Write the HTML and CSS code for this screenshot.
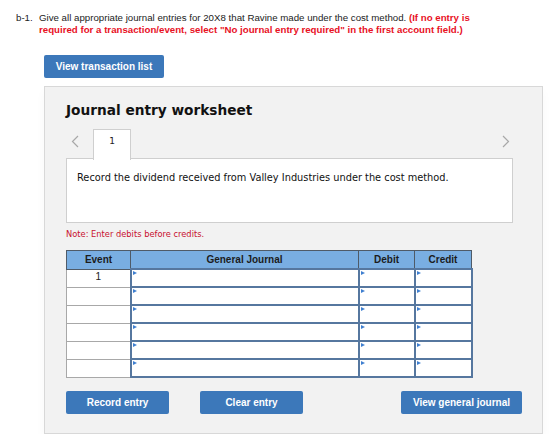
FILE: index.html
```html
<!DOCTYPE html>
<html lang="en">
<head>
    <meta charset="UTF-8">
    <title>Journal entry worksheet</title>
    <link rel="stylesheet" href="styles.css">
</head>
<body>

    <!-- question -->
    <div class="question">
        <span class="qnum">b-1.</span>
        <p class="qtext">Give all appropriate journal entries for 20X8 that Ravine made under the cost method. <strong class="warn">(If no entry is required for a transaction/event, select "No journal entry required" in the first account field.)</strong></p>
    </div>

    <button class="btn btn-list">View transaction list</button>

    <!-- worksheet -->
    <div class="panel">
        <h2 class="title">Journal entry worksheet</h2>

        <div class="tabs">
            <span class="arrow">
                <svg width="8" height="13" viewBox="0 0 8 13"><polyline points="7,1 1.5,6.5 7,12" fill="none" stroke="#a8a8a8" stroke-width="1.2"/></svg>
            </span>
            <div class="tab">1</div>
            <span class="arrow arrow-right">
                <svg width="8" height="13" viewBox="0 0 8 13"><polyline points="1,1 6.5,6.5 1,12" fill="none" stroke="#a8a8a8" stroke-width="1.2"/></svg>
            </span>
        </div>

        <div class="desc">Record the dividend received from Valley Industries under the cost method.</div>

        <p class="note">Note: Enter debits before credits.</p>

        <table class="journal">
            <thead>
                <tr>
                    <th class="col-event">Event</th>
                    <th class="col-gj">General Journal</th>
                    <th class="col-dr">Debit</th>
                    <th class="col-cr">Credit</th>
                </tr>
            </thead>
            <tbody>
                <tr><td class="event">1</td><td class="field"></td><td class="field"></td><td class="field"></td></tr>
                <tr><td class="event"></td><td class="field"></td><td class="field"></td><td class="field"></td></tr>
                <tr><td class="event"></td><td class="field"></td><td class="field"></td><td class="field"></td></tr>
                <tr><td class="event"></td><td class="field"></td><td class="field"></td><td class="field"></td></tr>
                <tr><td class="event"></td><td class="field"></td><td class="field"></td><td class="field"></td></tr>
                <tr><td class="event"></td><td class="field"></td><td class="field"></td><td class="field"></td></tr>
            </tbody>
        </table>

        <div class="actions">
            <button class="btn btn-record">Record entry</button>
            <button class="btn btn-clear">Clear entry</button>
            <button class="btn btn-view">View general journal</button>
        </div>
    </div>

</body>
</html>
```

FILE: styles.css
```css
body {
    margin: 0;
    background: #fff;
    font-family: "Liberation Sans", Arial, sans-serif;
    color: #222;
}
.question {
    display: flex;
    padding: 12px 0 0 16px;
    font-size: 9.7px;
    line-height: 12px;
}
.qnum {
    width: 23px;
    flex: none;
}
.qtext {
    margin: 0;
    width: 445px;
}
.warn {
    color: #e8111f;
}
.btn {
    border: none;
    border-radius: 2px;
    background: #3c78ba;
    color: #fff;
    font-family: "Liberation Sans", Arial, sans-serif;
    font-weight: bold;
    font-size: 10px;
    height: 23px;
    padding: 0;
    cursor: pointer;
}
.btn-list {
    display: block;
    width: 120px;
    margin: 19px 0 0 44px;
}
.panel {
    width: 456px;
    margin: 8px 0 0 44px;
    padding: 14px 20px 19px 21px;
    background: #f2f2f2;
    border: 1px solid #d8d8d8;
    box-shadow: 0 6px 10px rgba(0, 0, 0, 0.03);
}
.title {
    margin: 0;
    font-family: "DejaVu Sans", Verdana, sans-serif;
    font-size: 13.7px;
    line-height: 18px;
    color: #111;
}
.tabs {
    display: flex;
    align-items: flex-start;
    margin-top: 10px;
    height: 30px;
}
.arrow {
    width: 27px;
    padding: 5px 0 0 5px;
    box-sizing: border-box;
}
.arrow-right {
    margin-left: auto;
    width: 20px;
    padding-left: 0;
}
.tab {
    width: 36px;
    height: 30px;
    box-sizing: content-box;
    background: #fff;
    border: 1px solid #cfcfcf;
    border-bottom: none;
    text-align: center;
    font-family: "DejaVu Sans", Verdana, sans-serif;
    font-size: 9px;
    line-height: 22px;
    position: relative;
    z-index: 1;
}
.desc {
    width: 425px;
    height: 51px;
    margin-top: -1px;
    padding: 12px 10px 0 10px;
    background: #fff;
    border: 1px solid #cfcfcf;
    font-family: "DejaVu Sans", Verdana, sans-serif;
    font-size: 9.8px;
    line-height: 13px;
    color: #111;
}
.note {
    margin: 6px 0 0 0;
    font-family: "DejaVu Sans", Verdana, sans-serif;
    font-size: 8.3px;
    line-height: 11px;
    color: #c8102e;
}
.journal {
    margin-top: 10px;
    width: 405px;
    border-collapse: collapse;
    border: 1px solid #b8b8b8;
    table-layout: fixed;
}
.journal th {
    height: 17px;
    padding: 0;
    background: #79aee2;
    border: 1px solid #4f5b68;
    font-size: 10px;
    font-weight: bold;
    color: #1c1c1c;
}
.col-event { width: 63px; }
.col-gj { width: 227px; }
.col-dr { width: 55px; }
.col-cr { width: 56px; }
.journal tbody tr {
    height: 18px;
}
.journal td {
    padding: 0;
    background: #fff;
}
.event {
    border: 1px solid #a8a8a8;
    text-align: center;
    font-size: 10px;
    vertical-align: top;
    line-height: 14px;
}
.field {
    border: 2px solid #56779f;
    position: relative;
}
.field::before {
    content: "";
    position: absolute;
    left: 1px;
    top: 1px;
    border-left: 4px solid #3f7fd0;
    border-top: 2px solid transparent;
    border-bottom: 2px solid transparent;
}
.actions {
    display: flex;
    margin-top: 13px;
}
.btn-record,
.btn-clear {
    width: 103px;
    margin-right: 31px;
}
.btn-view {
    width: 121px;
    margin-left: auto;
}
```
